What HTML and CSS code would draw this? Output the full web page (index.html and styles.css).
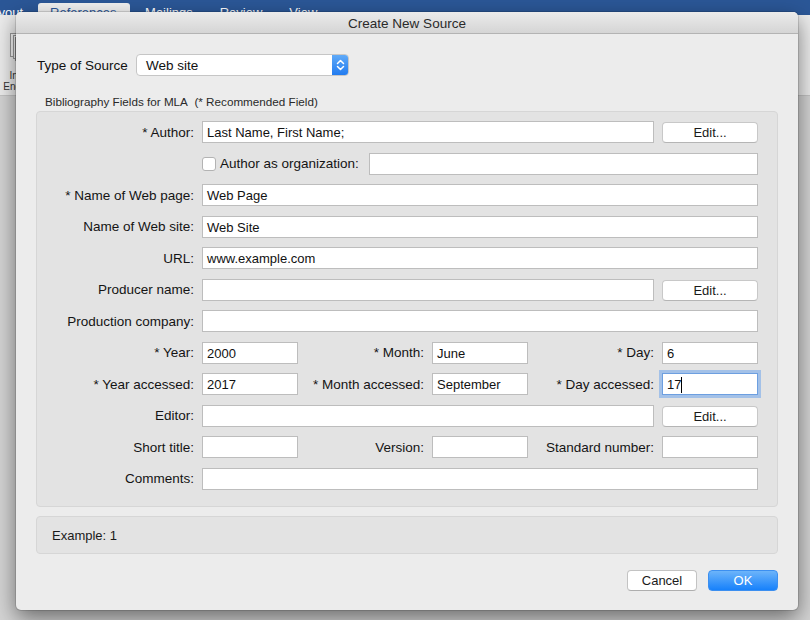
FILE: index.html
```html
<!DOCTYPE html>
<html lang="en">
<head>
<meta charset="utf-8">
<title>Create New Source</title>
<link rel="stylesheet" href="styles.css">
</head>
<body>
<div class="app">
  <div class="tabbar">
    <span class="tab tab-first">Layout</span>
    <span class="tab active">References</span>
    <span class="tab">Mailings</span>
    <span class="tab">Review</span>
    <span class="tab">View</span>
  </div>
  <div class="ribbon">
    <div class="rb-group">
      <svg class="rb-icon" width="28" height="28" viewBox="0 0 28 28">
        <rect x="2.5" y="0.5" width="17" height="23" fill="#f6f6f6" stroke="#9a9a9a"/>
        <rect x="5.5" y="2.5" width="17" height="23" fill="#f6f6f6" stroke="#9a9a9a"/>
        <rect x="7.5" y="4.5" width="17" height="23" fill="#fafafa" stroke="#8a8a8a"/>
      </svg>
      <div class="rb-label">Insert<br>Endnote</div>
    </div>
  </div>
  <div class="doc"></div>
</div>

<div class="dialog">
  <div class="titlebar">Create New Source</div>
  <div class="dlg-body">
    <div class="type-row">
      <span class="type-label">Type of Source</span>
      <div class="select">
        <span class="select-text">Web site</span>
        <span class="stepper">
          <svg width="17" height="22" viewBox="0 0 17 22">
            <path d="M5.5 9.5 L8.5 6.5 L11.5 9.5" fill="none" stroke="#fff" stroke-width="1.5" stroke-linecap="round" stroke-linejoin="round"/>
            <path d="M5.5 12.5 L8.5 15.5 L11.5 12.5" fill="none" stroke="#fff" stroke-width="1.5" stroke-linecap="round" stroke-linejoin="round"/>
          </svg>
        </span>
      </div>
    </div>

    <div class="caption">Bibliography Fields for MLA&nbsp;&nbsp;(* Recommended Field)</div>

    <div class="group">
      <div class="fields">
        <span class="lbl">* Author:</span>
        <div class="field span4">Last Name, First Name;</div>
        <div class="btn-edit">Edit...</div>

        <span class="lbl"></span>
        <div class="org span5">
          <span class="checkbox"></span>
          <span class="org-label">Author as organization:</span>
          <div class="field org-field"></div>
        </div>

        <span class="lbl">* Name of Web page:</span>
        <div class="field span5">Web Page</div>

        <span class="lbl">Name of Web site:</span>
        <div class="field span5">Web Site</div>

        <span class="lbl">URL:</span>
        <div class="field span5">www.example.com</div>

        <span class="lbl">Producer name:</span>
        <div class="field span4"></div>
        <div class="btn-edit">Edit...</div>

        <span class="lbl">Production company:</span>
        <div class="field span5"></div>

        <span class="lbl">* Year:</span>
        <div class="field">2000</div>
        <span class="lbl">* Month:</span>
        <div class="field">June</div>
        <span class="lbl">* Day:</span>
        <div class="field">6</div>

        <span class="lbl">* Year accessed:</span>
        <div class="field">2017</div>
        <span class="lbl">* Month accessed:</span>
        <div class="field">September</div>
        <span class="lbl">* Day accessed:</span>
        <div class="field focused">17<span class="caret"></span></div>

        <span class="lbl">Editor:</span>
        <div class="field span4"></div>
        <div class="btn-edit">Edit...</div>

        <span class="lbl">Short title:</span>
        <div class="field"></div>
        <span class="lbl">Version:</span>
        <div class="field"></div>
        <span class="lbl">Standard number:</span>
        <div class="field"></div>

        <span class="lbl">Comments:</span>
        <div class="field span5"></div>
      </div>
    </div>

    <div class="example">Example: 1</div>

    <div class="actions">
      <div class="btn btn-cancel">Cancel</div>
      <div class="btn btn-ok">OK</div>
    </div>
  </div>
</div>
</body>
</html>
```

FILE: styles.css
```css
* {
  box-sizing: border-box;
}

html,
body {
  margin: 0;
  padding: 0;
}

body {
  width: 810px;
  height: 620px;
  overflow: hidden;
  position: relative;
  font-family: "Liberation Sans", Arial, sans-serif;
  font-size: 13px;
  color: #1d1d1d;
  background: #cfcfcf;
}

/* ---------- Word window behind ---------- */
.app {
  height: 620px;
  display: flex;
  flex-direction: column;
}

.tabbar {
  height: 15px;
  flex: none;
  background: #2b5797;
  display: flex;
  align-items: flex-end;
  gap: 3px;
}

.tab {
  height: 12px;
  padding: 2px 12px 0;
  color: #ffffff;
  font-size: 13px;
  line-height: 16px;
  white-space: nowrap;
  overflow: hidden;
}

.tab-first {
  margin-left: -28px;
}

.tab.active {
  background: #f1f1f1;
  color: #2b579a;
  border-radius: 3px 3px 0 0;
  width: 92px;
}

.ribbon {
  height: 81px;
  flex: none;
  background: #ececec;
  border-bottom: 1px solid #c4c4c4;
  padding-top: 18px;
}

.rb-group {
  width: 44px;
  display: flex;
  flex-direction: column;
  align-items: center;
}

.rb-icon {
  display: block;
}

.rb-label {
  margin-top: 9px;
  font-size: 10px;
  line-height: 11px;
  text-align: center;
  color: #333;
}

.doc {
  flex: 1;
  background: #d4d4d4;
}

/* ---------- Dialog ---------- */
.dialog {
  position: absolute;
  left: 16px;
  top: 12px;
  width: 782px;
  height: 598px;
  background: #ececec;
  border-radius: 5px;
  box-shadow: 0 8px 22px rgba(0, 0, 0, 0.5), 0 0 0 1px rgba(0, 0, 0, 0.12);
  display: flex;
  flex-direction: column;
  overflow: hidden;
}

.titlebar {
  height: 22px;
  flex: none;
  background: linear-gradient(#ebebeb, #d5d5d5);
  border-bottom: 1px solid #b3b3b3;
  text-align: center;
  padding-top: 1px;
  line-height: 22px;
  font-size: 13.5px;
  color: #2a2a2a;
}

.dlg-body {
  flex: 1;
  padding: 20px 20px 19px;
  display: flex;
  flex-direction: column;
}

.type-row {
  height: 22px;
  display: flex;
  align-items: center;
}

.type-label {
  margin-left: 1px;
  width: 99px;
  font-size: 13.5px;
  color: #111;
}

.select {
  width: 213px;
  height: 22px;
  background: #fff;
  border: 1px solid #c6c6c6;
  border-radius: 4px;
  display: flex;
  align-items: center;
  overflow: hidden;
}

.select-text {
  flex: 1;
  padding-left: 9px;
  font-size: 13.5px;
  color: #111;
}

.stepper {
  width: 17px;
  height: 22px;
  margin-right: -1px;
  background: linear-gradient(#62acf8, #1f79ef);
  display: flex;
}

.caption {
  margin: 19px 0 2px 9px;
  font-size: 11.7px;
  line-height: 14px;
  color: #2a2a2a;
}

.group {
  height: 396px;
  background: #e3e3e3;
  border: 1px solid #d6d6d6;
  border-radius: 4px;
  padding: 9px 19px 0 9px;
}

.fields {
  display: grid;
  grid-template-columns: 148px 96px 118px 96px 118px 96px;
  column-gap: 8px;
  row-gap: 9.5px;
  grid-auto-rows: 22px;
}

.lbl {
  align-self: center;
  text-align: right;
  white-space: nowrap;
  font-size: 13.5px;
  color: #141414;
}

.field {
  height: 22px;
  background: #fff;
  border: 1px solid #bdbdbd;
  padding: 0 4px;
  line-height: 21px;
  color: #111;
  white-space: nowrap;
  overflow: hidden;
}

.span4 {
  grid-column: span 4;
}

.span5 {
  grid-column: span 5;
}

.field.focused {
  border-color: #6d9fe0;
  box-shadow: 0 0 0 3px rgba(120, 170, 235, 0.6);
  overflow: visible;
}

.caret {
  display: inline-block;
  width: 1px;
  height: 16px;
  background: #000;
  vertical-align: middle;
  margin-top: -2px;
}

.btn-edit {
  height: 21px;
  margin-top: 1px;
  background: #fff;
  border: 1px solid #c8c8c8;
  border-bottom-color: #b5b5b5;
  border-radius: 4px;
  text-align: center;
  line-height: 19px;
  color: #1a1a1a;
}

.org {
  display: flex;
  align-items: center;
}

.checkbox {
  width: 14px;
  height: 14px;
  flex: none;
  background: #fff;
  border: 1px solid #b3b3b3;
  border-radius: 3px;
  margin-right: 4px;
}

.org-label {
  flex: 1;
  white-space: nowrap;
  font-size: 13.5px;
  color: #141414;
}

.org-field {
  flex: 0 0 389px;
}

.example {
  margin-top: 9px;
  height: 38px;
  background: #e3e3e3;
  border: 1px solid #d6d6d6;
  border-radius: 4px;
  padding-left: 15px;
  display: flex;
  align-items: center;
  color: #1a1a1a;
}

.actions {
  margin-top: 16px;
  display: flex;
  justify-content: flex-end;
  gap: 11px;
}

.btn {
  width: 70px;
  height: 21px;
  border-radius: 4px;
  text-align: center;
  line-height: 19px;
}

.btn-cancel {
  background: #fff;
  border: 1px solid #c3c3c3;
  border-bottom-color: #aeaeae;
  color: #1a1a1a;
}

.btn-ok {
  background: linear-gradient(#6cb4fa, #1781fb);
  border: 1px solid #3c8ff0;
  color: #fff;
}
```
